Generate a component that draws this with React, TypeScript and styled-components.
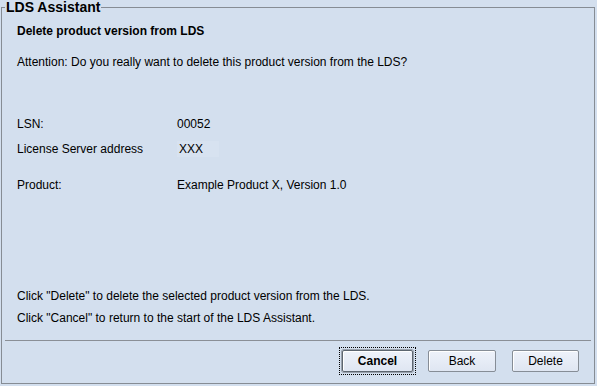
import React from 'react';
import styled, {createGlobalStyle} from 'styled-components';

const GlobalStyle = createGlobalStyle`
    html, body {
        margin: 0;
        padding: 0;
        background: #d3dfee;
    }
    body {
        font-family: 'Liberation Sans', Arial, sans-serif;
        font-size: 12px;
        color: #000;
    }
`;

const Page = styled.div`
    width: 597px;
    height: 386px;
    box-sizing: border-box;
    padding: 0 2px 2px 1px;
    background: #d3dfee;
`;

const Group = styled.fieldset`
    margin: 0;
    height: 100%;
    box-sizing: border-box;
    border: 1px solid #868c94;
    padding: 0;
    display: flex;
    flex-direction: column;
    min-width: 0;
`;

const Legend = styled.legend`
    font-weight: bold;
    font-size: 14px;
    padding: 0 1px;
    margin-left: 3px;
    line-height: 14px;
`;

const Body = styled.div`
    flex: 1;
    padding: 1px 15px 0;
    display: flex;
    flex-direction: column;
`;

const Title = styled.div`
    font-weight: bold;
    line-height: 16px;
    margin-top: 8px;
`;

const Line = styled.div<{$gap: number}>`
    line-height: 16px;
    margin-top: ${(p) => p.$gap}px;
    white-space: nowrap;
`;

const Row = styled.div<{$gap: number}>`
    display: grid;
    grid-template-columns: 160px 1fr;
    line-height: 16px;
    margin-top: ${(p) => p.$gap}px;
`;

const Value = styled.span<{$boxed?: boolean}>`
    ${(p) => p.$boxed && `
        justify-self: start;
        padding: 0 16px 0 2px;
        background: #d7e2f0;
    `}
`;

const Spacer = styled.div`
    flex: 1;
`;

const Separator = styled.div`
    height: 1px;
    margin: 14px 3px 0;
    background: #8a8f96;
`;

const Footer = styled.div`
    display: flex;
    justify-content: flex-end;
    align-items: center;
    padding: 9px 15px 11px 0;
`;

const Focus = styled.div`
    padding: 2px;
    margin: -3px 12px -3px -3px;
    border: 1px dotted #000;
    display: flex;
`;

const Button = styled.button<{$default?: boolean; $w: number}>`
    width: ${(p) => p.$w}px;
    height: 22px;
    box-sizing: border-box;
    font-family: 'Liberation Sans', Arial, sans-serif;
    font-size: 12px;
    font-weight: ${(p) => (p.$default ? 'bold' : 'normal')};
    color: #000;
    background: linear-gradient(#eef2fa, #dfe6f2);
    border: 1px solid ${(p) => (p.$default ? '#5d6670' : '#868d96')};
    border-radius: 2px;
    box-shadow: inset 1px 1px 0 #fff${(p) => (p.$default ? ', 0 0 0 1px #9aa2ad' : '')};
    padding: 0;
    & + & {
        margin-left: 16px;
    }
`;

export default function App() {
    return (
        <Page>
            <GlobalStyle/>
            <Group>
                <Legend>LDS Assistant</Legend>
                <Body>
                    <Title>Delete product version from LDS</Title>
                    <Line $gap={15}>Attention: Do you really want to delete this product version from the LDS?</Line>
                    <Row $gap={46}>
                        <span>LSN:</span>
                        <Value>00052</Value>
                    </Row>
                    <Row $gap={9}>
                        <span>License Server address</span>
                        <Value $boxed={true}>XXX</Value>
                    </Row>
                    <Row $gap={20}>
                        <span>Product:</span>
                        <Value>Example Product X, Version 1.0</Value>
                    </Row>
                    <Spacer/>
                    <Line $gap={0}>Click "Delete" to delete the selected product version from the LDS.</Line>
                    <Line $gap={6}>Click "Cancel" to return to the start of the LDS Assistant.</Line>
                </Body>
                <Separator/>
                <Footer>
                    <Focus>
                        <Button
                            type='button'
                            $default={true}
                            $w={71}
                        >
                            Cancel
                        </Button>
                    </Focus>
                    <Button
                        type='button'
                        $w={68}
                    >
                        Back
                    </Button>
                    <Button
                        type='button'
                        $w={67}
                    >
                        Delete
                    </Button>
                </Footer>
            </Group>
        </Page>
    );
}
